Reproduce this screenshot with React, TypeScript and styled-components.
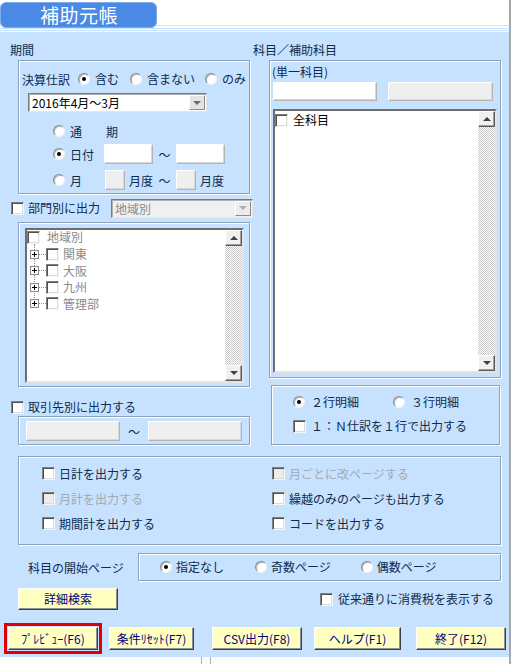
import React from 'react'
import styled, { createGlobalStyle } from 'styled-components'

const GlobalStyle = createGlobalStyle`
    html, body {
        margin: 0;
        padding: 0;
        background: #ffffff;
    }
    body {
        font-family: 'Noto Sans CJK JP', 'Liberation Sans', sans-serif;
        font-size: 12px;
    }
    #root {
        width: 512px;
        height: 664px;
        overflow: hidden;
    }
`

const TEXT = '#0d2b4d'
const BG = '#c6e2ff'

// 部門
const regions = ['関東', '大阪', '九州', '管理部']

const options = [
    { label: '日計を出力する', disabled: false },
    { label: '月ごとに改ページする', disabled: true },
    { label: '月計を出力する', disabled: true },
    { label: '繰越のみのページも出力する', disabled: false },
    { label: '期間計を出力する', disabled: false },
    { label: 'コードを出力する', disabled: false },
]

const footerButtons = [
    { label: 'ﾌﾟﾚﾋﾞｭｰ(F6)', w: 90, ml: 8, focused: true },
    { label: '条件ﾘｾｯﾄ(F7)', w: 85, ml: 11, focused: false },
    { label: 'CSV出力(F8)', w: 90, ml: 18, focused: false },
    { label: 'ヘルプ(F1)', w: 87, ml: 12, focused: false },
    { label: '終了(F12)', w: 90, ml: 15, focused: false },
]

function RadioOption({
    label,
    checked,
    ml = 0,
    gap = 5,
}: {
    label: string
    checked?: boolean
    ml?: number
    gap?: number
}) {
    return (
        <OptionLabel $ml={ml} $gap={gap}>
            <Radio $checked={checked} />
            <span>{label}</span>
        </OptionLabel>
    )
}

function CheckOption({
    label,
    disabled,
    ml = 0,
    gap = 4,
}: {
    label: string
    disabled?: boolean
    ml?: number
    gap?: number
}) {
    return (
        <OptionLabel $ml={ml} $gap={gap} $disabled={disabled}>
            <Checkbox $disabled={disabled} />
            <span>{label}</span>
        </OptionLabel>
    )
}

function ScrollBar() {
    return (
        <ScrollTrack>
            <ScrollButton $dir="up" />
            <ScrollFill />
            <ScrollButton $dir="down" />
        </ScrollTrack>
    )
}

function App() {
    return (
        <>
            <GlobalStyle />
            <Window>
                <Main>
                    <Header>
                        <TitleTab>補助元帳</TitleTab>
                    </Header>
                    <Body>
                        <TopGrid>
                            {/* 左：期間 */}
                            <Column $pl={10}>
                                <SectionLabel>期間</SectionLabel>
                                <GroupBox $ml={8} $mt={3} $w={232} $h={134} $pad="10px 0 0 3px">
                                    <Row $h={16}>
                                        <span>決算仕訳</span>
                                        <RadioOption label="含む" checked ml={8} />
                                        <RadioOption label="含まない" ml={11} />
                                        <RadioOption label="のみ" ml={10} />
                                    </Row>
                                    <Select $w={179} $mt={6} $ml={6}>
                                        <SelectText>2016年4月～3月</SelectText>
                                        <DropButton />
                                    </Select>
                                    <Row $h={20} $mt={9} $ml={31}>
                                        <Radio />
                                        <PeriodLabel $w={36}>通　　期</PeriodLabel>
                                    </Row>
                                    <Row $h={20} $mt={3} $ml={31}>
                                        <Radio $checked />
                                        <PeriodLabel $w={34}>日付</PeriodLabel>
                                        <Field $w={49} $h={20} />
                                        <Tilde>～</Tilde>
                                        <Field $w={49} $h={20} />
                                    </Row>
                                    <Row $h={20} $mt={6} $ml={31}>
                                        <Radio />
                                        <PeriodLabel $w={35}>月</PeriodLabel>
                                        <Field $w={20} $h={20} $disabled />
                                        <Unit>月度</Unit>
                                        <Tilde>～</Tilde>
                                        <Field $w={20} $h={20} $disabled />
                                        <Unit>月度</Unit>
                                    </Row>
                                </GroupBox>

                                <Row $h={20} $mt={4} $ml={1}>
                                    <CheckOption label="部門別に出力" />
                                    <Select $w={142} $ml={11} $disabled>
                                        <SelectText $disabled>地域別</SelectText>
                                        <DropButton $disabled />
                                    </Select>
                                </Row>

                                <GroupBox $ml={8} $mt={4} $w={232} $h={165} $pad="5px 0 0 6px">
                                    <ListBox $w={219} $h={155}>
                                        <ListContent>
                                            <TreeRoot>
                                                <Checkbox />
                                                <TreeText $ml={7}>地域別</TreeText>
                                            </TreeRoot>
                                            <TreeChildren>
                                                {regions.map((r) => (
                                                    <TreeRow key={r}>
                                                        <Expander />
                                                        <Connector />
                                                        <Checkbox />
                                                        <TreeText $ml={4}>{r}</TreeText>
                                                    </TreeRow>
                                                ))}
                                            </TreeChildren>
                                        </ListContent>
                                        <ScrollBar />
                                    </ListBox>
                                </GroupBox>

                                <Row $h={16} $mt={12} $ml={1}>
                                    <CheckOption label="取引先別に出力する" />
                                </Row>
                                <GroupBox $ml={8} $mt={1} $w={232} $h={29} $pad="4px 0 0 7px">
                                    <Row $h={20}>
                                        <Field $w={94} $h={20} $disabled />
                                        <Tilde $w={28}>～</Tilde>
                                        <Field $w={94} $h={20} $disabled />
                                    </Row>
                                </GroupBox>
                            </Column>

                            {/* 右：科目 */}
                            <Column $pl={0}>
                                <SectionLabel>科目／補助科目</SectionLabel>
                                <GroupBox $ml={16} $mt={3} $w={232} $h={318} $pad="4px 0 0 2px">
                                    <SubLabel>(単一科目)</SubLabel>
                                    <Row $h={19} $mt={3} $ml={1}>
                                        <Field $w={104} $h={19} />
                                        <Field $w={105} $h={19} $ml={11} $disabled />
                                    </Row>
                                    <ListBox $w={224} $h={264} $mt={8} $ml={1}>
                                        <ListContent $pt={2}>
                                            <TreeRoot>
                                                <Checkbox />
                                                <AccountText>全科目</AccountText>
                                            </TreeRoot>
                                        </ListContent>
                                        <ScrollBar />
                                    </ListBox>
                                </GroupBox>

                                <GroupBox $ml={18} $mt={7} $w={229} $h={60} $pad="8px 0 0 21px">
                                    <Row $h={16}>
                                        <RadioOption label="２行明細" checked gap={6} />
                                        <RadioOption label="３行明細" ml={34} gap={6} />
                                    </Row>
                                    <Row $h={16} $mt={8}>
                                        <CheckOption label="１：Ｎ仕訳を１行で出力する" gap={5} />
                                    </Row>
                                </GroupBox>
                            </Column>
                        </TopGrid>

                        <GroupBox $ml={18} $mt={11} $w={483} $h={89} $pad="4px 0 0 23px">
                            <OptionGrid>
                                {options.map((o) => (
                                    <CheckOption key={o.label} label={o.label} disabled={o.disabled} />
                                ))}
                            </OptionGrid>
                        </GroupBox>

                        <Row $h={28} $mt={8}>
                            <StartLabel>科目の開始ページ</StartLabel>
                            <GroupBox $w={363} $h={28} $pad="0 0 0 21px">
                                <Row $h={26}>
                                    <RadioOption label="指定なし" checked gap={4} />
                                    <RadioOption label="奇数ページ" ml={31} gap={4} />
                                    <RadioOption label="偶数ページ" ml={30} gap={4} />
                                </Row>
                            </GroupBox>
                        </Row>

                        <Row $h={22} $mt={7}>
                            <YellowButton $w={100} $h={22} $ml={18}>
                                詳細検索
                            </YellowButton>
                            <CheckOption label="従来通りに消費税を表示する" ml={202} gap={5} />
                        </Row>

                        <Row $h={23} $mt={17}>
                            {footerButtons.map((b) => (
                                <YellowButton
                                    key={b.label}
                                    $w={b.w}
                                    $h={23}
                                    $ml={b.ml}
                                    $focused={b.focused}
                                >
                                    {b.label}
                                </YellowButton>
                            ))}
                        </Row>
                    </Body>
                    <Footer>
                        <FooterCell $w={201} />
                        <FooterCell $w={8} />
                    </Footer>
                </Main>
            </Window>
        </>
    )
}

export default App

const Window = styled.div`
    width: 512px;
    height: 664px;
    display: flex;
    background: #ffffff;
`

const Main = styled.div`
    width: 509px;
    height: 664px;
    border-right: 2px solid #a8a8a8;
    display: flex;
    flex-direction: column;
`

const Header = styled.div`
    height: 33px;
    flex-shrink: 0;
    box-sizing: border-box;
    padding-top: 2px;
    background: linear-gradient(
        to bottom,
        #ffffff 0 25px,
        #d2e2f4 25px 26px,
        #ffffff 26px 28px,
        ${BG} 28px 29px,
        #ffffff 29px 30px,
        ${BG} 30px 31px,
        #f4f9ff 31px 32px,
        ${BG} 32px 33px
    );
`

const TitleTab = styled.div`
    width: 157px;
    height: 26px;
    box-sizing: border-box;
    border-radius: 6px;
    background: #4a8ae4;
    border: 1px solid #7eabec;
    color: #ffffff;
    font-size: 19px;
    line-height: 23px;
    padding-left: 39px;
    letter-spacing: 0.5px;
`

const Body = styled.div`
    flex: 1;
    background: ${BG};
    color: ${TEXT};
    display: flex;
    flex-direction: column;
    font-size: 12px;
`

const Footer = styled.div`
    height: 7px;
    flex-shrink: 0;
    display: flex;
    background: #fbfbfb;
`

const FooterCell = styled.div<{ $w: number }>`
    width: ${({ $w }) => $w}px;
    border-right: 1px solid #b0b0b0;
`

const TopGrid = styled.div`
    display: grid;
    grid-template-columns: 253px 256px;
`

const Column = styled.div<{ $pl: number }>`
    display: flex;
    flex-direction: column;
    padding-left: ${({ $pl }) => $pl}px;
`

const SectionLabel = styled.div`
    margin-top: 10px;
    height: 14px;
    line-height: 14px;
    white-space: nowrap;
`

const SubLabel = styled.div`
    height: 14px;
    line-height: 14px;
`

const GroupBox = styled.div<{ $w: number; $h: number; $ml?: number; $mt?: number; $pad?: string }>`
    width: ${({ $w }) => $w}px;
    height: ${({ $h }) => $h}px;
    margin-left: ${({ $ml }) => $ml ?? 0}px;
    margin-top: ${({ $mt }) => $mt ?? 0}px;
    padding: ${({ $pad }) => $pad ?? '0'};
    box-sizing: border-box;
    border: 1px solid #8ea1b8;
    box-shadow: 1px 1px 0 #ffffff, inset 1px 1px 0 #ffffff;
    display: flex;
    flex-direction: column;
    flex-shrink: 0;
`

const Row = styled.div<{ $h: number; $mt?: number; $ml?: number }>`
    display: flex;
    align-items: center;
    height: ${({ $h }) => $h}px;
    margin-top: ${({ $mt }) => $mt ?? 0}px;
    margin-left: ${({ $ml }) => $ml ?? 0}px;
    white-space: nowrap;
    flex-shrink: 0;
`

const OptionLabel = styled.label<{ $ml: number; $gap: number; $disabled?: boolean }>`
    display: inline-flex;
    align-items: center;
    gap: ${({ $gap }) => $gap}px;
    margin-left: ${({ $ml }) => $ml}px;
    line-height: 14px;
    white-space: nowrap;
    color: ${({ $disabled }) => ($disabled ? '#a3a9b0' : TEXT)};
`

const Radio = styled.span<{ $checked?: boolean }>`
    width: 12px;
    height: 12px;
    box-sizing: border-box;
    border-radius: 50%;
    background: #ffffff;
    border: 1px solid;
    border-color: #8a8a8a #f2f2f2 #f2f2f2 #8a8a8a;
    box-shadow: inset 1px 1px 0 #b8b8b8;
    display: inline-flex;
    align-items: center;
    justify-content: center;
    flex-shrink: 0;

    &::after {
        content: '';
        width: 4px;
        height: 4px;
        border-radius: 50%;
        background: #000000;
        display: ${({ $checked }) => ($checked ? 'block' : 'none')};
    }
`

const Checkbox = styled.span<{ $disabled?: boolean }>`
    width: 13px;
    height: 13px;
    box-sizing: border-box;
    background: ${({ $disabled }) => ($disabled ? '#ececec' : '#ffffff')};
    border: 1px solid;
    border-color: #808080 #f6f6f6 #f6f6f6 #808080;
    box-shadow: inset 1px 1px 0 #505050, inset -1px -1px 0 #dcdcdc;
    flex-shrink: 0;
    display: inline-block;
`

const PeriodLabel = styled.span<{ $w: number }>`
    width: ${({ $w }) => $w}px;
    margin-left: 5px;
`

const Tilde = styled.span<{ $w?: number }>`
    width: ${({ $w }) => $w ?? 23}px;
    text-align: center;
`

const Unit = styled.span`
    margin-left: 4px;
`

const Field = styled.div<{ $w: number; $h: number; $ml?: number; $disabled?: boolean }>`
    width: ${({ $w }) => $w}px;
    height: ${({ $h }) => $h}px;
    margin-left: ${({ $ml }) => $ml ?? 0}px;
    box-sizing: border-box;
    background: ${({ $disabled }) => ($disabled ? '#efefef' : '#ffffff')};
    border: 1px solid;
    border-color: #ffffff #b4b4b4 #b4b4b4 #ffffff;
    box-shadow: inset -1px -1px 0 #d8d8d8;
    flex-shrink: 0;
`

const Select = styled.div<{ $w: number; $mt?: number; $ml?: number; $disabled?: boolean }>`
    width: ${({ $w }) => $w}px;
    height: 19px;
    margin-top: ${({ $mt }) => $mt ?? 0}px;
    margin-left: ${({ $ml }) => $ml ?? 0}px;
    box-sizing: border-box;
    display: flex;
    align-items: center;
    background: ${({ $disabled }) => ($disabled ? '#f0f0f0' : '#ffffff')};
    border: 1px solid;
    border-color: #7a7a7a #e6e6e6 #e6e6e6 #7a7a7a;
    box-shadow: inset 1px 1px 0 #b0b0b0;
    padding: 1px;
    flex-shrink: 0;
`

const SelectText = styled.span<{ $disabled?: boolean }>`
    flex: 1;
    padding-left: 2px;
    line-height: 15px;
    color: ${({ $disabled }) => ($disabled ? '#8a8a8a' : '#000000')};
`

const DropButton = styled.span<{ $disabled?: boolean }>`
    width: 16px;
    height: 15px;
    box-sizing: border-box;
    background: ${({ $disabled }) => ($disabled ? '#ececec' : '#e4e4e4')};
    border: 1px solid;
    border-color: #ffffff #8c8c8c #8c8c8c #ffffff;
    display: flex;
    align-items: center;
    justify-content: center;

    &::after {
        content: '';
        border-left: 4px solid transparent;
        border-right: 4px solid transparent;
        border-top: 4px solid ${({ $disabled }) => ($disabled ? '#b0b0b0' : '#6a6a6a')};
    }
`

const ListBox = styled.div<{ $w: number; $h: number; $mt?: number; $ml?: number }>`
    width: ${({ $w }) => $w}px;
    height: ${({ $h }) => $h}px;
    margin-top: ${({ $mt }) => $mt ?? 0}px;
    margin-left: ${({ $ml }) => $ml ?? 0}px;
    box-sizing: border-box;
    background: #ffffff;
    border: 2px solid;
    border-color: #6e6e6e #e4e4e4 #e4e4e4 #6e6e6e;
    display: flex;
    flex-shrink: 0;
`

const ListContent = styled.div<{ $pt?: number }>`
    flex: 1;
    padding-top: ${({ $pt }) => $pt ?? 0}px;
    display: flex;
    flex-direction: column;
`

const ScrollTrack = styled.div`
    width: 17px;
    display: flex;
    flex-direction: column;
`

const ScrollFill = styled.div`
    flex: 1;
    background-color: #ffffff;
    background-image: repeating-conic-gradient(#c8c8c8 0 25%, #ffffff 0 50%);
    background-size: 2px 2px;
`

const ScrollButton = styled.div<{ $dir: 'up' | 'down' }>`
    width: 17px;
    height: 16px;
    box-sizing: border-box;
    background: #f0f0f0;
    border: 1px solid;
    border-color: #ffffff #5a5a5a #5a5a5a #ffffff;
    box-shadow: inset -1px -1px 0 #a0a0a0;
    display: flex;
    align-items: center;
    justify-content: center;

    &::after {
        content: '';
        border-left: 4px solid transparent;
        border-right: 4px solid transparent;
        ${({ $dir }) =>
            $dir === 'up' ? 'border-bottom: 4px solid #404040;' : 'border-top: 4px solid #404040;'}
    }
`

const TreeRoot = styled.div`
    display: flex;
    align-items: center;
    height: 14px;
    white-space: nowrap;
`

const TreeText = styled.span<{ $ml: number }>`
    margin-left: ${({ $ml }) => $ml}px;
    color: #8a8a8a;
    line-height: 14px;
`

const AccountText = styled.span`
    margin-left: 5px;
    color: #000000;
    line-height: 14px;
`

const TreeChildren = styled.div`
    position: relative;
    padding-top: 2px;

    &::before {
        content: '';
        position: absolute;
        left: 7px;
        top: 0;
        bottom: 8px;
        border-left: 1px dotted #8a8a8a;
    }
`

const TreeRow = styled.div`
    position: relative;
    display: flex;
    align-items: center;
    height: 16.5px;
    padding-left: 3px;
    white-space: nowrap;
`

const Expander = styled.span`
    width: 9px;
    height: 9px;
    box-sizing: border-box;
    border: 1px solid #8a8a8a;
    background: #ffffff;
    position: relative;
    flex-shrink: 0;

    &::before {
        content: '';
        position: absolute;
        left: 1px;
        top: 3px;
        width: 5px;
        height: 1px;
        background: #000000;
    }
    &::after {
        content: '';
        position: absolute;
        left: 3px;
        top: 1px;
        width: 1px;
        height: 5px;
        background: #000000;
    }
`

const Connector = styled.span`
    width: 7px;
    border-top: 1px dotted #8a8a8a;
    flex-shrink: 0;
`

const OptionGrid = styled.div`
    display: grid;
    grid-template-columns: 230px auto;
    grid-auto-rows: 25px;
    align-items: center;
`

const StartLabel = styled.span`
    width: 110px;
    margin-left: 28px;
`

const YellowButton = styled.button<{ $w: number; $h: number; $ml: number; $focused?: boolean }>`
    width: ${({ $w }) => $w}px;
    height: ${({ $h }) => $h}px;
    margin-left: ${({ $ml }) => $ml}px;
    padding: 0;
    box-sizing: border-box;
    background: #ffffc0;
    color: #00007a;
    font-family: 'Noto Sans CJK JP', 'Liberation Sans', sans-serif;
    font-size: 12px;
    line-height: 14px;
    border: 1px solid;
    border-color: #ffffff #404040 #404040 #ffffff;
    box-shadow: inset -1px -1px 0 #909090;
    white-space: nowrap;
    flex-shrink: 0;
    outline: ${({ $focused }) => ($focused ? '3px solid #e00000' : 'none')};
    outline-offset: 1px;
`
